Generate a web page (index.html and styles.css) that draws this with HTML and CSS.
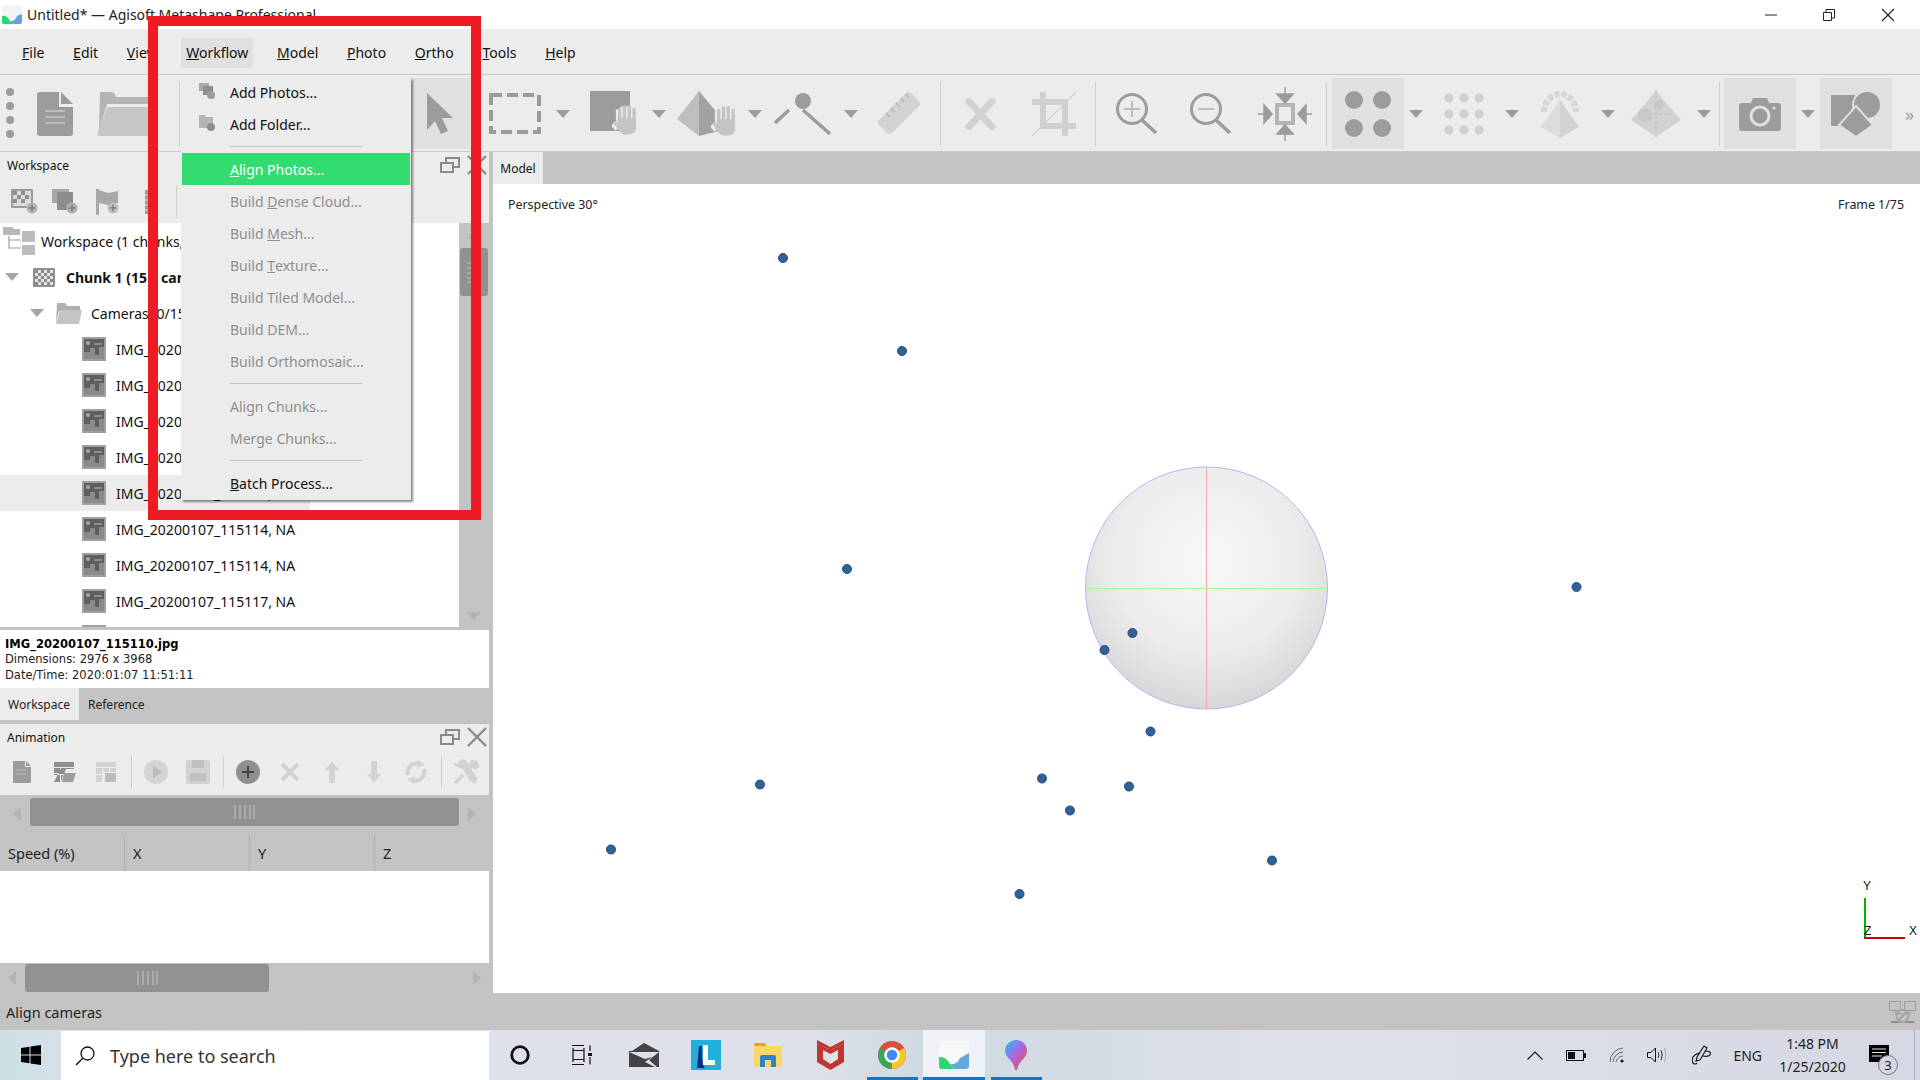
FILE: index.html
```html
<!DOCTYPE html>
<html lang="en">
<head>
    <meta charset="UTF-8">
    <title>Untitled* — Agisoft Metashape Professional</title>
    <link rel="stylesheet" href="styles.css">
</head>
<body>
    <svg class="defs" width="0" height="0">
        <symbol id="hand" viewBox="-3 0 27 32">
            <path d="M5 16V5M10 16V2M15 16V2M20 16V5" fill="none" stroke="#ececec" stroke-width="8"/>
            <path d="M-1 19L4 24" fill="none" stroke="#ececec" stroke-width="9"/>
            <path d="M5 16V5M10 16V2M15 16V2M20 16V5" fill="none" stroke="#c4c4c4" stroke-width="3.4" stroke-linecap="round"/>
            <path d="M3 14H22V23Q22 31 14 31H10Q7 31 5 28L-1 20L1 17L3 19Z" fill="#c4c4c4"/>
        </symbol>
        <symbol id="photo" viewBox="0 0 24 24">
            <rect width="24" height="24" fill="#a0a0a0"/>
            <rect x="2" y="2" width="20" height="20" fill="#8a8a8a"/>
            <path d="M2 2H22V10H17V18H13V11H8V15H2Z" fill="#5f5f5f"/>
            <circle cx="6" cy="6" r="2" fill="#a8a8a8"/>
            <path d="M12 6H20V8H12Z" fill="#8c8c8c"/>
        </symbol>
        <symbol id="restore" viewBox="0 0 20 16">
            <path d="M1 6H13V15H1ZM6 6V1H19V10H13" fill="none" stroke="#8a8a8a" stroke-width="2"/>
        </symbol>
        <symbol id="close" viewBox="0 0 20 20">
            <path d="M1 1L19 19M19 1L1 19" stroke="#8a8a8a" stroke-width="2.4"/>
        </symbol>
        <symbol id="grip" viewBox="0 0 21 14">
            <path d="M1 0V14M6 0V14M11 0V14M16 0V14M20 0V14" stroke="#b4b4b4" stroke-width="1.5"/>
        </symbol>
    </svg>

    <div class="titlebar">
        <svg class="app-icon" width="20" height="20" viewBox="0 0 20 20">
            <rect width="20" height="20" rx="2" fill="#f2f4f5"/>
            <path d="M0 11Q5 10 8 16Q10 19 12 19H2Q0 19 0 17Z" fill="#2fd56f"/>
            <path d="M8 16Q13 17 15 11L20 9V17Q20 19 18 19H12Q10 19 8 16Z" fill="#5fa4dc"/>
        </svg>
        <span class="title-text">Untitled* — Agisoft Metashape Professional</span>
        <div class="win-btns">
            <svg width="12" height="12" viewBox="0 0 12 12"><path d="M0 6H12" stroke="#222"/></svg>
            <svg width="12" height="12" viewBox="0 0 12 12"><path d="M.5 3.5H8.5V11.5H.5ZM3 3V.5H11.5V9H9" fill="none" stroke="#222"/></svg>
            <svg width="14" height="14" viewBox="0 0 14 14"><path d="M1 1L13 13M13 1L1 13" stroke="#222" stroke-width="1.1"/></svg>
        </div>
    </div>

    <div class="menubar">
        <span class="menu-item"><u>F</u>ile</span>
        <span class="menu-item"><u>E</u>dit</span>
        <span class="menu-item"><u>V</u>iew</span>
        <span class="menu-item open"><u>W</u>orkflow</span>
        <span class="menu-item"><u>M</u>odel</span>
        <span class="menu-item"><u>P</u>hoto</span>
        <span class="menu-item"><u>O</u>rtho</span>
        <span class="menu-item"><u>T</u>ools</span>
        <span class="menu-item"><u>H</u>elp</span>
    </div>

    <div class="toolbar">
        <div class="gripper"><i></i><i></i><i></i><i></i></div>
        <div class="tool">
            <svg width="36" height="44" viewBox="0 0 36 44"><path d="M3 0H22V15H36V41a3 3 0 0 1-3 3H3a3 3 0 0 1-3-3V3a3 3 0 0 1 3-3Z" fill="#9c9c9c"/><path d="M24 0L36 12H24Z" fill="#9c9c9c"/><path d="M8 19H28M8 25H28M8 31H28" stroke="#bcbcbc" stroke-width="2"/></svg>
        </div>
        <div class="tool">
            <svg width="60" height="44" viewBox="0 0 60 44"><path d="M3 0H14Q18 0 19 5H54V12H10L2 38Z" fill="#b4b4b4"/><path d="M10 15H60L52 44H3Q0 44 1 40Z" fill="#c6c6c6"/></svg>
        </div>
        <div class="tsep first"></div>
        <div class="tool on">
            <svg width="26" height="42" viewBox="0 0 26 42"><path d="M0 0L26 25H15L21 38L14 41L8 28L0 37Z" fill="#9c9c9c"/></svg>
        </div>
        <div class="tool gap-s">
            <svg width="52" height="41" viewBox="0 0 52 41"><rect x="2" y="2" width="48" height="37" fill="none" stroke="#9c9c9c" stroke-width="4" stroke-dasharray="11 5"/></svg>
        </div>
        <div class="drop"></div>
        <div class="tool">
            <svg width="50" height="46" viewBox="0 0 50 46"><rect x="4" y="0" width="40" height="40" fill="#9c9c9c"/><use href="#hand" x="26" y="13" width="26" height="32"/></svg>
        </div>
        <div class="drop"></div>
        <div class="tool">
            <svg width="60" height="46" viewBox="0 0 60 46"><path d="M22 0L0 28L22 45Z" fill="#bebebe"/><path d="M22 0L42 24V40L22 45Z" fill="#a2a2a2"/><use href="#hand" x="34" y="14" width="26" height="32"/></svg>
        </div>
        <div class="drop"></div>
        <div class="tool">
            <svg width="58" height="44" viewBox="0 0 58 44"><circle cx="29" cy="9" r="8" fill="#9c9c9c"/><path d="M1 31L15 18M29 18L56 42" stroke="#9c9c9c" stroke-width="3.4"/></svg>
        </div>
        <div class="drop"></div>
        <div class="tool">
            <svg width="42" height="43" viewBox="0 0 42 43"><path d="M28 1Q30 -1 33 1L41 9Q43 12 41 14L14 41Q11 43 9 41L1 33Q-1 30 1 28Z" fill="#d2d2d2"/><path d="M8 21L12 25M13 16L16 20M18 11L22 15M23 6L26 10M28 2L31 6" stroke="#b8b8b8" stroke-width="1.6"/></svg>
        </div>
        <div class="tsep tight"></div>
        <div class="tool">
            <svg width="33" height="32" viewBox="0 0 33 32"><path d="M3 1L30 31M30 1L3 31" stroke="#d2d2d2" stroke-width="7"/></svg>
        </div>
        <div class="tool gap-l">
            <svg width="44" height="44" viewBox="0 0 44 44"><path d="M11 0V34H44M33 44V10H0" fill="none" stroke="#d0d0d0" stroke-width="6"/><path d="M0 44L44 0" stroke="#d0d0d0" stroke-width="1.2"/></svg>
        </div>
        <div class="tsep"></div>
        <div class="tool">
            <svg width="42" height="41" viewBox="0 0 42 41"><circle cx="16" cy="16" r="14.5" fill="none" stroke="#9c9c9c" stroke-width="3"/><path d="M16 8V24M8 16H24" stroke="#bcbcbc" stroke-width="2"/><path d="M26 27L40 40" stroke="#9c9c9c" stroke-width="3.6"/></svg>
        </div>
        <div class="tool gap-l">
            <svg width="42" height="41" viewBox="0 0 42 41"><circle cx="16" cy="16" r="14.5" fill="none" stroke="#9c9c9c" stroke-width="3"/><path d="M8 16H24" stroke="#bcbcbc" stroke-width="2"/><path d="M26 27L40 40" stroke="#9c9c9c" stroke-width="3.6"/></svg>
        </div>
        <div class="tool gap-l">
            <svg width="54" height="54" viewBox="0 0 54 54"><rect x="19" y="18" width="16" height="18" fill="none" stroke="#b4b4b4" stroke-width="4"/><path d="M27 0V7M19 7H35L27 16ZM27 54V47M19 47H35L27 38ZM0 27H6M6 18V36L14 27ZM54 27H48M48 18V36L40 27Z" fill="#9c9c9c" stroke="#9c9c9c" stroke-width="1.5"/></svg>
        </div>
        <div class="tsep"></div>
        <div class="tool on">
            <svg width="46" height="46" viewBox="0 0 46 46"><circle cx="9" cy="9" r="9" fill="#9c9c9c"/><circle cx="37" cy="9" r="9" fill="#9c9c9c"/><circle cx="9" cy="37" r="9" fill="#9c9c9c"/><circle cx="37" cy="37" r="9" fill="#9c9c9c"/></svg>
        </div>
        <div class="drop"></div>
        <div class="tool">
            <svg width="40" height="42" viewBox="0 0 40 42"><g fill="#cfcfcf"><circle cx="5" cy="5" r="4.5"/><circle cx="20" cy="5" r="4.5"/><circle cx="35" cy="5" r="4.5"/><circle cx="5" cy="21" r="4.5"/><circle cx="20" cy="21" r="4.5"/><circle cx="35" cy="21" r="4.5"/><circle cx="5" cy="37" r="4.5"/><circle cx="20" cy="37" r="4.5"/><circle cx="35" cy="37" r="4.5"/></g></svg>
        </div>
        <div class="drop"></div>
        <div class="tool">
            <svg width="42" height="48" viewBox="0 0 42 48"><path d="M21 10L40 37L21 48L2 37Z" fill="#d2d2d2"/><path d="M21 10L21 48L2 37Z" fill="#dcdcdc"/><path d="M5 22A16 18 0 0 1 37 22" fill="none" stroke="#d6d6d6" stroke-width="6" stroke-dasharray="5 2"/></svg>
        </div>
        <div class="drop"></div>
        <div class="tool">
            <svg width="50" height="46" viewBox="0 0 50 46"><path d="M25 0L50 29L25 46L0 29Z" fill="#d2d2d2"/><path d="M25 0V46" stroke="#bdbdbd" stroke-dasharray="3 2"/><path d="M8 23H42" stroke="#bdbdbd" stroke-dasharray="3 2"/><circle cx="14" cy="24" r="7" fill="#c8c8c8"/><circle cx="28" cy="14" r="5" fill="#c8c8c8"/></svg>
        </div>
        <div class="drop"></div>
        <div class="tsep last"></div>
        <div class="tool on">
            <svg width="42" height="34" viewBox="0 0 42 34"><path d="M3 6H12L14 1H28L30 6H39Q42 6 42 9V31Q42 34 39 34H3Q0 34 0 31V9Q0 6 3 6Z" fill="#9c9c9c"/><circle cx="21" cy="19" r="9" fill="none" stroke="#e0e0e0" stroke-width="3"/><circle cx="35" cy="11" r="1.6" fill="#e0e0e0"/></svg>
        </div>
        <div class="drop"></div>
        <div class="tool on">
            <svg width="50" height="46" viewBox="0 0 50 46"><rect x="0" y="4" width="24" height="31" fill="#9c9c9c"/><circle cx="36" cy="14" r="14" fill="#9c9c9c" stroke="#e0e0e0" stroke-width="2"/><path d="M25 15L42 34L25 46L8 34Z" fill="#9c9c9c" stroke="#e0e0e0" stroke-width="2"/></svg>
        </div>
        <span class="more">»</span>
    </div>

    <div class="main">
        <div class="left">
            <div class="panel">
                <div class="panel-title">
                    <span>Workspace</span>
                    <span class="panel-btns">
                        <svg width="20" height="16"><use href="#restore"/></svg>
                        <svg width="20" height="20"><use href="#close"/></svg>
                    </span>
                </div>
                <div class="panel-tools">
                    <svg class="ws-a" width="27" height="25" viewBox="0 0 27 25"><rect width="22" height="19" rx="1" fill="#9c9c9c"/><rect x="2" y="2" width="18" height="15" fill="#dcdcdc"/><path d="M2 2h4v4H2zM10 2h4v4h-4zM6 6h4v4H6zM14 6h4v4h-4zM2 10h4v4H2zM10 10h4v4h-4z" fill="#8f8f8f"/><circle cx="21" cy="19" r="5.5" fill="#b4b4b4"/><path d="M21 15.500V22.500M17.500 19H24.500" stroke="#666"/></svg>
                    <svg class="ws-b" width="26" height="25" viewBox="0 0 26 25"><rect width="17" height="14" fill="#a8a8a8"/><rect x="5" y="3" width="16" height="18" fill="#8d8d8d"/><circle cx="20" cy="19" r="5.500" fill="#b0b0b0"/><path d="M20 15.500V22.500M16.500 19H23.500" stroke="#666"/></svg>
                    <svg class="ws-c" width="23" height="26" viewBox="0 0 23 26"><path d="M0 0H3V26H0ZM3 1L12 4L22 2V14L12 16L3 14Z" fill="#a8a8a8"/><circle cx="17" cy="19" r="5.500" fill="#c0c0c0"/><path d="M17 15.500V22.500M13.500 19H20.500" stroke="#666"/></svg>
                    <svg class="ws-d" width="6" height="24" viewBox="0 0 6 24"><rect width="6" height="24" fill="#9c9c9c"/><path d="M0 5H6M0 10H6M0 15H6M0 20H6" stroke="#dcdcdc"/></svg>
                    <span class="panel-sep"></span>
                </div>
            </div>

            <div class="tree">
                <div class="tree-row lvl-0">
                    <svg class="ws-icon" width="32" height="28" viewBox="0 0 32 28"><path d="M0 0H9L11 2H17V8H0Z" fill="#b8b8b8"/><path d="M19 4H32V15H19ZM19 18H32V28H19Z" fill="#bcbcbc"/><path d="M6 9V21H18M6 13H18" fill="none" stroke="#9c9c9c" stroke-width="1.2"/></svg>
                    <span class="ws-label">Workspace (1 chunks, 15 cameras)</span>
                </div>
                <div class="tree-row lvl-1">
                    <i class="twisty"></i>
                    <svg class="chunk-icon" width="22" height="19" viewBox="0 0 22 19"><rect width="22" height="19" rx="1" fill="#8f8f8f"/><rect x="2" y="2" width="18" height="15" fill="#e4e4e4"/><path d="M2 2h3v3H2zM8 2h3v3H8zM14 2h3v3h-3zM5 5h3v3H5zM11 5h3v3h-3zM17 5h3v3h-3zM2 8h3v3H2zM8 8h3v3H8zM14 8h3v3h-3zM5 11h3v3H5zM11 11h3v3h-3zM17 11h3v3h-3zM2 14h3v3H2zM8 14h3v3H8zM14 14h3v3h-3z" fill="#8a8a8a"/></svg>
                    <b>Chunk 1 (15<span class="chunk-rest">cameras)</span></b>
                </div>
                <div class="tree-row lvl-2">
                    <i class="twisty"></i>
                    <svg class="folder-icon" width="26" height="21" viewBox="0 0 26 21"><path d="M1 0H9L11 3H24V8H3L0 18Z" fill="#b0b0b0"/><path d="M4 7H26L23 21H1Q0 21 0 19Z" fill="#c4c4c4"/></svg>
                    <span>Cameras (0/15 aligned)</span>
                </div>
                <div class="tree-row lvl-3"><svg width="24" height="24"><use href="#photo"/></svg><span>IMG_20200107_115104, NA</span></div>
                <div class="tree-row lvl-3"><svg width="24" height="24"><use href="#photo"/></svg><span>IMG_20200107_115106, NA</span></div>
                <div class="tree-row lvl-3"><svg width="24" height="24"><use href="#photo"/></svg><span>IMG_20200107_115108, NA</span></div>
                <div class="tree-row lvl-3"><svg width="24" height="24"><use href="#photo"/></svg><span>IMG_20200107_115109, NA</span></div>
                <div class="tree-row lvl-3 selected"><svg width="24" height="24"><use href="#photo"/></svg><span>IMG_20200107_115110, NA</span></div>
                <div class="tree-row lvl-3"><svg width="24" height="24"><use href="#photo"/></svg><span>IMG_20200107_115114, NA</span></div>
                <div class="tree-row lvl-3"><svg width="24" height="24"><use href="#photo"/></svg><span>IMG_20200107_115114, NA</span></div>
                <div class="tree-row lvl-3"><svg width="24" height="24"><use href="#photo"/></svg><span>IMG_20200107_115117, NA</span></div>
                <div class="tree-row lvl-3"><svg width="24" height="24"><use href="#photo"/></svg></div>
                <div class="vscroll">
                    <i class="arrow-up"></i>
                    <div class="vthumb"><svg width="14" height="21" viewBox="0 0 14 21"><path d="M0 1H14M0 6H14M0 11H14M0 16H14M0 20H14" stroke="#b0b0b0" stroke-width="1.500"/></svg></div>
                    <i class="arrow-down"></i>
                </div>
            </div>

            <div class="info">
                <div class="info-name">IMG_20200107_115110.jpg</div>
                <div>Dimensions: 2976 x 3968</div>
                <div>Date/Time: 2020:01:07 11:51:11</div>
            </div>

            <div class="tabs">
                <span class="tab active">Workspace</span>
                <span class="tab">Reference</span>
            </div>

            <div class="panel anim">
                <div class="panel-title">
                    <span>Animation</span>
                    <span class="panel-btns">
                        <svg width="20" height="16"><use href="#restore"/></svg>
                        <svg width="20" height="20"><use href="#close"/></svg>
                    </span>
                </div>
                <div class="anim-tools">
                    <svg class="a1" width="18" height="22" viewBox="0 0 18 22"><path d="M1 0H12V6H18V21Q18 22 17 22H1Q0 22 0 21V1Q0 0 1 0Z" fill="#9c9c9c"/><path d="M13 0L18 5H13Z" fill="#9c9c9c"/><path d="M3 9H13M3 13H13" stroke="#bcbcbc"/></svg>
                    <svg class="a2" width="22" height="20" viewBox="0 0 22 20"><path d="M0 0H20V5H0ZM0 6H6V11H0ZM7 6H20V7H12L10 12H0V13H6V20H0ZM7 13H9L7 20Z" fill="#8e8e8e"/><path d="M10 11H22L19 20H8Z" fill="#9c9c9c"/></svg>
                    <svg class="a3" width="20" height="20" viewBox="0 0 20 20"><path d="M0 0H20V5H0ZM0 6H6V12H0ZM7 6H13V10H7ZM14 6H20V10H14ZM0 13H6V20H0Z" fill="#d2d2d2"/><rect x="9" y="11" width="11" height="9" rx="1" fill="#bcbcbc"/></svg>
                    <i class="asep s1"></i>
                    <svg class="a4" width="24" height="24" viewBox="0 0 24 24"><circle cx="12" cy="12" r="12" fill="#d4d4d4"/><path d="M9 6L18 12L9 18Z" fill="#bcbcbc"/></svg>
                    <svg class="a5" width="24" height="24" viewBox="0 0 24 24"><rect width="24" height="24" rx="2" fill="#d2d2d2"/><path d="M6 0H18V8H6Z" fill="#c0c0c0"/><path d="M4 13H20V21H4Z" fill="#c0c0c0"/></svg>
                    <i class="asep s2"></i>
                    <svg class="a6" width="24" height="24" viewBox="0 0 24 24"><circle cx="12" cy="12" r="12" fill="#8f8f8f"/><path d="M12 6V18M6 12H18" stroke="#444" stroke-width="2"/></svg>
                    <svg class="a7" width="18" height="18" viewBox="0 0 18 18"><path d="M1 1L17 17M17 1L1 17" stroke="#d2d2d2" stroke-width="4"/></svg>
                    <svg class="a8" width="14" height="22" viewBox="0 0 14 22"><path d="M7 0L14 9H10V22H4V9H0Z" fill="#d2d2d2"/></svg>
                    <svg class="a9" width="14" height="22" viewBox="0 0 14 22"><path d="M7 22L14 13H10V0H4V13H0Z" fill="#d2d2d2"/></svg>
                    <svg class="a10" width="22" height="24" viewBox="0 0 22 24"><path d="M3 15A9 9 0 0 1 15 4M19 9A9 9 0 0 1 7 20" fill="none" stroke="#d2d2d2" stroke-width="4"/><path d="M13 0L20 5L12 8ZM9 24L2 19L10 16Z" fill="#d2d2d2"/></svg>
                    <i class="asep s3"></i>
                    <svg class="a11" width="28" height="26" viewBox="0 0 28 26"><path d="M3 24L11 16" stroke="#d2d2d2" stroke-width="3.500"/><path d="M18 9L25 2" stroke="#d2d2d2" stroke-width="2"/><path d="M9 0L15 2L21 13L26 20L23 25L18 22L11 10L3 7L1 4L5 5Z" fill="#d2d2d2"/><path d="M19 1Q27 1 27 8L23 11L17 5Z" fill="#d2d2d2"/></svg>
                </div>
            </div>

            <div class="hscroll top">
                <i class="arrow-left"></i>
                <div class="hthumb"><svg width="21" height="14"><use href="#grip"/></svg></div>
                <i class="arrow-right"></i>
            </div>
            <div class="table-head">
                <span>Speed (%)</span><span>X</span><span>Y</span><span>Z</span>
            </div>
            <div class="table-body"></div>
            <div class="hscroll bottom">
                <i class="arrow-left"></i>
                <div class="hthumb"><svg width="21" height="14"><use href="#grip"/></svg></div>
                <i class="arrow-right"></i>
            </div>
        </div>

        <div class="right">
            <div class="view-tabs"><span class="view-tab">Model</span></div>
            <div class="viewport">
                <div class="view-labels"><span>Perspective 30°</span><span>Frame 1/75</span></div>
                <svg class="scene" width="1427" height="809" viewBox="493 184 1427 809">
                    <defs>
                        <radialGradient id="ball" cx="0.5" cy="0.38" r="0.65">
                            <stop offset="0" stop-color="#f8f8f8"/>
                            <stop offset="0.6" stop-color="#ececec"/>
                            <stop offset="1" stop-color="#d4d4d4"/>
                        </radialGradient>
                    </defs>
                    <circle cx="1206.500" cy="588" r="121" fill="url(#ball)" stroke="#b4b4f4" stroke-width="1"/>
                    <path d="M1206.500 467V709" stroke="#f4a8a8"/>
                    <path d="M1085.500 588.500H1327.500" stroke="#a8f4a8"/>
                    <g fill="#2f6298" stroke="#234a78" stroke-width="1">
                        <circle cx="783" cy="258" r="4.500"/>
                        <circle cx="902" cy="351" r="4.500"/>
                        <circle cx="847" cy="569" r="4.500"/>
                        <circle cx="1576.500" cy="587" r="4.500"/>
                        <circle cx="1132.500" cy="633" r="4.500"/>
                        <circle cx="1104.500" cy="650" r="4.500"/>
                        <circle cx="1150.500" cy="731.500" r="4.500"/>
                        <circle cx="760" cy="784.500" r="4.500"/>
                        <circle cx="1042" cy="778.500" r="4.500"/>
                        <circle cx="1129" cy="786.500" r="4.500"/>
                        <circle cx="1070" cy="810.500" r="4.500"/>
                        <circle cx="611" cy="849.500" r="4.500"/>
                        <circle cx="1272" cy="860.500" r="4.500"/>
                        <circle cx="1019.500" cy="894" r="4.500"/>
                    </g>
                    <path d="M1865 898V938" stroke="#00b400" stroke-width="2"/>
                    <path d="M1864 938H1905" stroke="#c80000" stroke-width="2"/>
                    <g class="axis-label">
                        <text x="1863" y="890">Y</text>
                        <text x="1864" y="935">Z</text>
                        <text x="1909" y="935">X</text>
                    </g>
                </svg>
            </div>
        </div>
    </div>

    <div class="statusbar">
        <span>Align cameras</span>
        <svg width="27" height="22" viewBox="0 0 27 22"><path d="M.5 .5H11.500V9.500H.5ZM15.500 .5H26.500V9.500H15.500ZM6 10V13H21V10" fill="none" stroke="#9e9e9e"/><path d="M2 21H25" stroke="#8e8e8e" stroke-width="2"/><circle cx="13.500" cy="15" r="6" fill="none" stroke="#a4a4a4" stroke-width="2"/><path d="M9 20L18 10" stroke="#a4a4a4" stroke-width="2"/></svg>
    </div>

    <div class="taskbar">
        <div class="start">
            <svg width="20" height="20" viewBox="0 0 20 20"><path d="M0 3L8.500 1.700V9.500H0ZM9.500 1.500L20 0V9.500H9.500ZM0 10.500H8.500V18.300L0 17ZM9.500 10.500H20V20L9.500 18.500Z" fill="#000"/></svg>
        </div>
        <div class="search">
            <svg width="20" height="20" viewBox="0 0 20 20"><circle cx="12.500" cy="7.500" r="6.500" fill="none" stroke="#111" stroke-width="1.300"/><path d="M8 12L1 19" stroke="#111" stroke-width="1.500"/></svg>
            <span>Type here to search</span>
        </div>
        <div class="task-apps">
            <div class="task-app"><svg width="20" height="20" viewBox="0 0 20 20"><circle cx="10" cy="10" r="8.300" fill="none" stroke="#111" stroke-width="2.800"/></svg></div>
            <div class="task-app"><svg width="20" height="20" viewBox="0 0 20 20"><path d="M0 .5H12M0 19.500H12M1 3V17M1 5.500H12V14.500H1M12 3V17M18 .5V6M18 12V19.500" fill="none" stroke="#111" stroke-width="1.200"/><rect x="16" y="8" width="4" height="3" fill="#111"/></svg></div>
            <div class="task-app"><svg width="30" height="25" viewBox="0 0 30 25"><path d="M15 0L30 8L3 8Z" fill="#444446"/><path d="M0 9L16 16L23 14L16 19L26 24H0ZM30 9V24H28L20 17Z" fill="#444446"/><path d="M0 8H30V9H0Z" fill="#444446"/></svg></div>
            <div class="task-app"><svg width="30" height="30" viewBox="0 0 30 30"><rect width="30" height="30" fill="#22afdc"/><path d="M8 6L6 28H14Q10 24 11 6Z" fill="#0b2b83"/><path d="M12 5H17V20H24V25H12Z" fill="#fff"/></svg></div>
            <div class="task-app"><svg width="28" height="24" viewBox="0 0 28 24"><path d="M0 2Q0 0 2 0H11L13 3H0Z" fill="#e5a50f"/><path d="M0 3H28V22Q28 24 26 24H2Q0 24 0 22Z" fill="#fcd666"/><path d="M6 24V14Q6 12 8 12H20Q22 12 22 14V24H17V17H11V24Z" fill="#2a86c8"/></svg></div>
            <div class="task-app"><svg width="27" height="30" viewBox="0 0 27 30"><path d="M0 4L13.500 10L27 4V22L13.500 30L0 22Z" fill="#c0362f"/><path d="M0 0L13.500 7L27 0V4L13.500 10L0 4Z" fill="#c0362f"/><path d="M6 10L13.500 14L21 10V19L13.500 24L6 19Z" fill="#dfe1ea"/></svg></div>
            <div class="task-app running"><svg width="28" height="28" viewBox="0 0 28 28"><circle cx="14" cy="14" r="14" fill="#db4f42"/><path d="M14 14L26.100 7A14 14 0 0 1 14 28Z" fill="#f6c728"/><path d="M14 14L14 28A14 14 0 0 1 1.900 7Z" fill="#3aa757"/><circle cx="14" cy="14" r="6.500" fill="#4285f4" stroke="#fff" stroke-width="2.500"/></svg></div>
            <div class="task-app current running"><svg width="30" height="29" viewBox="0 0 30 29"><rect width="30" height="29" rx="3" fill="#f7f8f9"/><path d="M0 16Q7 15 11 23Q13 27 16 28H3Q0 28 0 25Z" fill="#2fd56f"/><path d="M11 23Q18 24 21 17L30 12V25Q30 28 27 28H16Q13 27 11 23Z" fill="#65a7de"/></svg></div>
            <div class="task-app running"><svg width="22" height="30" viewBox="0 0 22 30"><defs><linearGradient id="p3d" x1="0" y1="0" x2="1" y2="1"><stop offset="0" stop-color="#1cc8e8"/><stop offset="0.45" stop-color="#a46ae8"/><stop offset="1" stop-color="#f04830"/></linearGradient></defs><path d="M11 0C18 0 22 5 22 11C22 18 14 20 12 30H10C9 20 0 18 0 11C0 5 5 0 11 0Z" fill="url(#p3d)"/></svg></div>
        </div>
        <div class="tray">
            <svg class="t-caret" width="16" height="9" viewBox="0 0 16 9"><path d="M.5 8.500L8 1L15.500 8.500" fill="none" stroke="#111" stroke-width="1.100"/></svg>
            <svg class="t-batt" width="20" height="11" viewBox="0 0 20 11"><rect x=".5" y=".5" width="17" height="10" fill="none" stroke="#111"/><rect x="2" y="2" width="7" height="7" fill="#111"/><rect x="18" y="3" width="2" height="5" fill="#111"/></svg>
            <svg class="t-wifi" width="16" height="16" viewBox="0 0 16 16"><path d="M1 15A14 14 0 0 1 14 1M4 15A11 11 0 0 1 14 5M7 15A8 8 0 0 1 14 9" fill="none" stroke="#666"/><circle cx="13" cy="14" r="1.600" fill="#111"/></svg>
            <svg class="t-vol" width="20" height="16" viewBox="0 0 20 16"><path d="M.5 5.500H4L8.500 1V15L4 10.500H.5Z" fill="none" stroke="#111"/><path d="M11 5Q13 8 11 11M14 3Q16.500 8 14 13" fill="none" stroke="#333"/><path d="M17.500 1Q20.500 8 17.500 15" fill="none" stroke="#aaa"/></svg>
            <svg class="t-pen" width="20" height="20" viewBox="0 0 20 20"><path d="M12 1L15 3L8 15L4 16L5 12ZM13 6Q20 6 18 10Q16 12 11 11M7 8Q-2 11 1 18Q3 20 5 18" fill="none" stroke="#111" stroke-width="1.100"/></svg>
            <span class="t-lang">ENG</span>
            <div class="t-clock"><span>1:48 PM</span><span>1/25/2020</span></div>
            <div class="t-note">
                <svg width="20" height="17" viewBox="0 0 20 17"><path d="M0 0H20V17H0Z" fill="#000"/><path d="M3 4H17M3 7.500H17M3 11H13" stroke="#e0e2ea"/></svg>
                <span class="badge">3</span>
            </div>
            <i class="t-desk"></i>
        </div>
    </div>

    <div class="menu">
        <div class="mi enabled"><svg width="16" height="16" viewBox="0 0 16 16"><rect width="10" height="8" fill="#a8a8a8"/><rect x="4" y="3" width="10" height="9" fill="#8e8e8e"/><circle cx="12" cy="12" r="4" fill="#9c9c9c"/></svg>Add Photos...</div>
        <div class="mi enabled"><svg width="16" height="16" viewBox="0 0 16 16"><path d="M0 0H6L7 2H14V13H0Z" fill="#b4b4b4"/><circle cx="12" cy="12" r="4" fill="#8e8e8e"/></svg>Add Folder...</div>
        <hr>
        <div class="mi hot"><u>A</u>lign Photos...</div>
        <div class="mi">Build <u>D</u>ense Cloud...</div>
        <div class="mi">Build <u>M</u>esh...</div>
        <div class="mi">Build <u>T</u>exture...</div>
        <div class="mi">Build Tiled Model...</div>
        <div class="mi">Build DEM...</div>
        <div class="mi">Build Orthomosaic...</div>
        <hr>
        <div class="mi">Align Chunks...</div>
        <div class="mi">Merge Chunks...</div>
        <hr>
        <div class="mi enabled"><u>B</u>atch Process...</div>
    </div>

    <div class="callout"></div>
</body>
</html>
```

FILE: styles.css
```css
* {
    box-sizing: border-box;
}
html, body {
    margin: 0;
    height: 1080px;
    overflow: hidden;
}
body {
    display: flex;
    flex-direction: column;
    font-family: "Noto Sans", "Open Sans", sans-serif;
    font-size: 14px;
    color: #111;
    background: #c3c3c3;
    position: relative;
}
i {
    display: block;
}
.defs {
    position: absolute;
}

/* title + menu */
.titlebar {
    height: 29px;
    background: #fff;
    display: flex;
    align-items: center;
    padding-left: 2px;
    flex: none;
}
.title-text {
    margin-left: 5px;
    font-size: 14px;
    color: #222;
}
.win-btns {
    margin-left: auto;
    display: flex;
    align-items: center;
    width: 155px;
    justify-content: space-between;
    padding-right: 25px;
}
.menubar {
    height: 46px;
    flex: none;
    background: #ececec;
    border-bottom: 1px solid #c8c8c8;
    display: flex;
    align-items: center;
    padding-left: 17px;
    padding-top: 2px;
    gap: 18.7px;
}
.menu-item {
    height: 30px;
    line-height: 30px;
    padding: 0 5px;
    white-space: nowrap;
}
.menu-item.open {
    background: #e0e0e0;
}

/* main toolbar */
.toolbar {
    height: 77px;
    flex: none;
    background: #ececec;
    border-bottom: 1px solid #c8c8c8;
    display: flex;
    align-items: center;
    padding-top: 1px;
    padding-left: 6px;
    position: relative;
}
.gripper {
    width: 13px;
    margin-top: -1px;
    display: flex;
    flex-direction: column;
    gap: 6px;
}
.gripper i {
    width: 8px;
    height: 8px;
    border-radius: 50%;
    background: #9c9c9c;
}
.tool {
    width: 72px;
    height: 71px;
    flex: none;
    display: flex;
    align-items: center;
    justify-content: center;
}
.tool.on {
    background: #e0e0e0;
}
.tool.gap-s {
    margin-left: 3px;
}
.tool.gap-l {
    margin-left: 2px;
}
.drop {
    width: 24px;
    flex: none;
    display: flex;
    justify-content: center;
}
.drop::after {
    content: "";
    border-left: 7px solid transparent;
    border-right: 7px solid transparent;
    border-top: 8px solid #9c9c9c;
}
.tsep {
    width: 1px;
    height: 64px;
    background: #d0d0d0;
    margin: 0 5px;
    flex: none;
}
.tsep.first {
    margin: 0 224px 0 16px;
}
.tsep.tight {
    margin-right: 3px;
}
.tsep.last {
    margin: 0 4px 0 3px;
}
.more {
    margin-left: 13px;
    font-size: 18px;
    line-height: 1;
    color: #9c9c9c;
}

/* main area */
.main {
    flex: 1;
    display: flex;
    min-height: 0;
}
.left {
    width: 493px;
    flex: none;
    display: flex;
    flex-direction: column;
}
.panel {
    width: 489px;
    background: #ececec;
    font-size: 12px;
}
.panel-title {
    height: 28px;
    display: flex;
    align-items: center;
    justify-content: space-between;
    padding: 0 2px 2px 7px;
}
.panel-btns {
    display: flex;
    align-items: center;
    gap: 7px;
}
.panel-tools {
    height: 43px;
    display: flex;
    align-items: center;
    position: relative;
}
.ws-a { margin-left: 11px; }
.ws-b { margin-left: 14px; }
.ws-c { margin-left: 18px; }
.ws-d { margin-left: 26px; }
.panel-sep {
    width: 1px;
    height: 32px;
    background: #d0d0d0;
    margin-left: 25px;
}

/* tree */
.tree {
    height: 404px;
    margin-bottom: 3px;
    width: 489px;
    background: #fff;
    overflow: hidden;
    position: relative;
}
.tree-row {
    width: 459px;
    height: 36px;
    display: flex;
    align-items: center;
    white-space: nowrap;
    overflow: hidden;
}
.tree-row.selected {
    width: 310px;
    background: #ececec;
}
.lvl-0 { padding-left: 3px; }
.lvl-1 { padding-left: 5px; }
.lvl-2 { padding-left: 30px; }
.lvl-3 { padding-left: 82px; }
.lvl-3 span { margin-left: 10px; }
.ws-label { margin-left: 6px; }
.chunk-icon { margin-left: 14px; margin-right: 11px; }
.chunk-rest { margin-left: 14px; }
.folder-icon { margin-left: 12px; margin-right: 9px; }
.twisty {
    border-left: 7px solid transparent;
    border-right: 7px solid transparent;
    border-top: 8px solid #a4a4a4;
}
.vscroll {
    position: absolute;
    top: 0;
    right: 0;
    width: 30px;
    height: 404px;
    background: #c3c3c3;
    display: flex;
    flex-direction: column;
    align-items: center;
}
.arrow-up {
    margin-top: 8px;
    height: 8px;
    border-left: 7px solid transparent;
    border-right: 7px solid transparent;
    border-bottom: 8px solid #b4b4b4;
}
.vthumb {
    width: 28px;
    height: 48px;
    margin-top: 9px;
    background: #919191;
    border-radius: 3px;
    display: flex;
    align-items: center;
    justify-content: center;
}
.arrow-down {
    margin-top: auto;
    margin-bottom: 7px;
    border-left: 7px solid transparent;
    border-right: 7px solid transparent;
    border-top: 8px solid #b4b4b4;
}

/* photo info */
.info {
    width: 489px;
    height: 58px;
    background: #fff;
    padding: 7px 5px 0;
    font-family: "DejaVu Sans", sans-serif;
    font-size: 11.5px;
    line-height: 15.3px;
    color: #222;
}
.info-name {
    font-weight: bold;
    font-size: 11.5px;
    color: #000;
}
.tabs {
    height: 36px;
    flex: none;
    display: flex;
    font-size: 12px;
}
.tab {
    height: 32px;
    line-height: 33px;
    padding: 0 9px 0 9px;
    color: #222;
}
.tab.active {
    width: 79px;
    padding-left: 8px;
    background: #ececec;
}

/* animation panel */
.anim-tools {
    height: 43px;
    position: relative;
}
.anim-tools svg,
.asep {
    position: absolute;
}
.a1 { left: 13px; top: 9px; }
.a2 { left: 54px; top: 10px; }
.a3 { left: 96px; top: 10px; }
.a4 { left: 144px; top: 8px; }
.a5 { left: 186px; top: 8px; }
.a6 { left: 236px; top: 8px; }
.a7 { left: 281px; top: 11px; }
.a8 { left: 325px; top: 9px; }
.a9 { left: 367px; top: 9px; }
.a10 { left: 405px; top: 8px; }
.a11 { left: 452px; top: 7px; }
.asep {
    top: 4px;
    width: 1px;
    height: 32px;
    background: #d0d0d0;
}
.s1 { left: 131px; }
.s2 { left: 223px; }
.s3 { left: 441px; }

/* scroll bars */
.hscroll {
    width: 489px;
    position: relative;
    display: flex;
    align-items: center;
    flex: none;
}
.hscroll.top {
    height: 40px;
    padding: 0 30px 6px;
}
.hscroll.bottom {
    height: 30px;
    padding: 0 8px;
}
.hthumb {
    height: 28px;
    background: #919191;
    border-radius: 3px;
    display: flex;
    align-items: center;
    justify-content: center;
}
.top .hthumb {
    width: 429px;
}
.bottom .hthumb {
    width: 244px;
    position: absolute;
    left: 25px;
    top: 1px;
}
.arrow-left,
.arrow-right {
    position: absolute;
    border-top: 7px solid transparent;
    border-bottom: 7px solid transparent;
}
.arrow-left {
    border-right: 8px solid #b4b4b4;
}
.arrow-right {
    border-left: 8px solid #b4b4b4;
}
.top .arrow-left { left: 13px; top: 12px; }
.top .arrow-right { left: 468px; top: 12px; }
.bottom .arrow-left { left: 8px; top: 8px; }
.bottom .arrow-right { left: 473px; top: 8px; }

/* keyframes table */
.table-head {
    width: 489px;
    height: 36px;
    flex: none;
    display: grid;
    grid-template-columns: 125px 125px 125px 114px;
    color: #222;
    font-size: 14.5px;
}
.table-head span {
    padding-left: 8px;
    line-height: 37px;
    border-right: 1px solid #b0b0b0;
}
.table-head span + span {
    padding-left: 8px;
}
.table-head span:last-child {
    border-right: 0;
}
.table-body {
    width: 489px;
    height: 92px;
    flex: none;
    background: #fff;
}

/* model view */
.right {
    flex: 1;
    display: flex;
    flex-direction: column;
    min-width: 0;
}
.view-tabs {
    height: 32px;
    flex: none;
    display: flex;
}
.view-tab {
    width: 50px;
    background: #ececec;
    font-size: 12px;
    line-height: 34px;
    text-align: center;
}
.viewport {
    flex: 1;
    background: #fff;
    position: relative;
}
.view-labels {
    display: flex;
    justify-content: space-between;
    padding: 12px 16px 0 15px;
    font-size: 12.4px;
    line-height: 18px;
    color: #222;
}
.scene {
    position: absolute;
    left: 0;
    top: 0;
}
.axis-label {
    font-family: "Liberation Sans", sans-serif;
    font-size: 12px;
    fill: #111;
}

/* status */
.statusbar {
    height: 37px;
    flex: none;
    display: flex;
    align-items: center;
    justify-content: space-between;
    padding: 1px 4px 0 6px;
    font-size: 14.5px;
    color: #222;
}

/* windows taskbar */
.taskbar {
    height: 50px;
    flex: none;
    display: flex;
    align-items: center;
    background: linear-gradient(90deg, #cde0e6 0, #d6e0e9 60px, #dfe1ea 500px, #dfe1ea 800px, #cfd9e0 930px, #d4dbe4 1050px, #dfe1ea 1300px, #d5d8e4 1920px);
}
.start {
    width: 61px;
    display: flex;
    justify-content: center;
    flex: none;
}
.search {
    width: 428px;
    height: 49px;
    margin-top: 1px;
    background: #fff;
    display: flex;
    align-items: center;
    gap: 15px;
    padding-left: 14px;
    font-size: 18px;
    color: #333;
    flex: none;
}
.task-apps {
    display: flex;
    height: 50px;
}
.task-app {
    width: 62px;
    height: 50px;
    display: flex;
    align-items: center;
    justify-content: center;
    flex: none;
    position: relative;
}
.task-app.current {
    background: #eef1f5;
}
.task-app.running::after {
    content: "";
    position: absolute;
    left: 6px;
    right: 5px;
    bottom: 0;
    height: 3px;
    background: #0078d7;
}
.task-app.current::after {
    left: 0;
    right: 0;
}
.tray {
    margin-left: auto;
    display: flex;
    align-items: center;
    height: 50px;
    position: relative;
    color: #222;
}
.t-batt { margin-left: 23px; }
.t-wifi { margin-left: 23px; }
.t-vol { margin-left: 22px; }
.t-pen { margin-left: 25px; }
.t-lang { margin-left: 21px; }
.t-clock {
    margin-left: 17px;
    width: 67px;
    display: flex;
    flex-direction: column;
    align-items: center;
    line-height: 23px;
    white-space: nowrap;
}
.t-note {
    width: 45px;
    margin-left: 23px;
    position: relative;
    height: 20px;
}
.badge {
    position: absolute;
    left: 9px;
    top: 10px;
    width: 20px;
    height: 20px;
    border-radius: 50%;
    border: 1px solid #777;
    background: #d5d8e4;
    font-size: 13px;
    line-height: 18px;
    text-align: center;
}
.t-desk {
    width: 1px;
    height: 50px;
    background: #aeb2bc;
    margin-right: 5px;
}

/* open Workflow menu */
.menu {
    position: absolute;
    left: 181px;
    top: 78px;
    width: 230px;
    height: 422px;
    padding: 0 1px;
    background: #ececec;
    box-shadow: 2px 2px 2px rgba(0, 0, 0, 0.45);
    color: #8e8e8e;
}
.mi {
    height: 32px;
    display: flex;
    align-items: center;
    padding-left: 48px;
    position: relative;
    white-space: pre;
}
.mi:first-child {
    margin-top: -2px;
}
.mi svg {
    position: absolute;
    left: 17px;
    top: 7px;
}
.mi.enabled {
    color: #111;
}
.mi.hot {
    background: #32dc6e;
    color: #fff;
}
.menu hr {
    height: 1px;
    width: 132px;
    margin: 6px 0 6px 48px;
    border: 0;
    background: #c4c4c4;
}
.callout {
    position: absolute;
    left: 148px;
    top: 16px;
    width: 333px;
    height: 504px;
    border: 10px solid #ed1c24;
}
```
